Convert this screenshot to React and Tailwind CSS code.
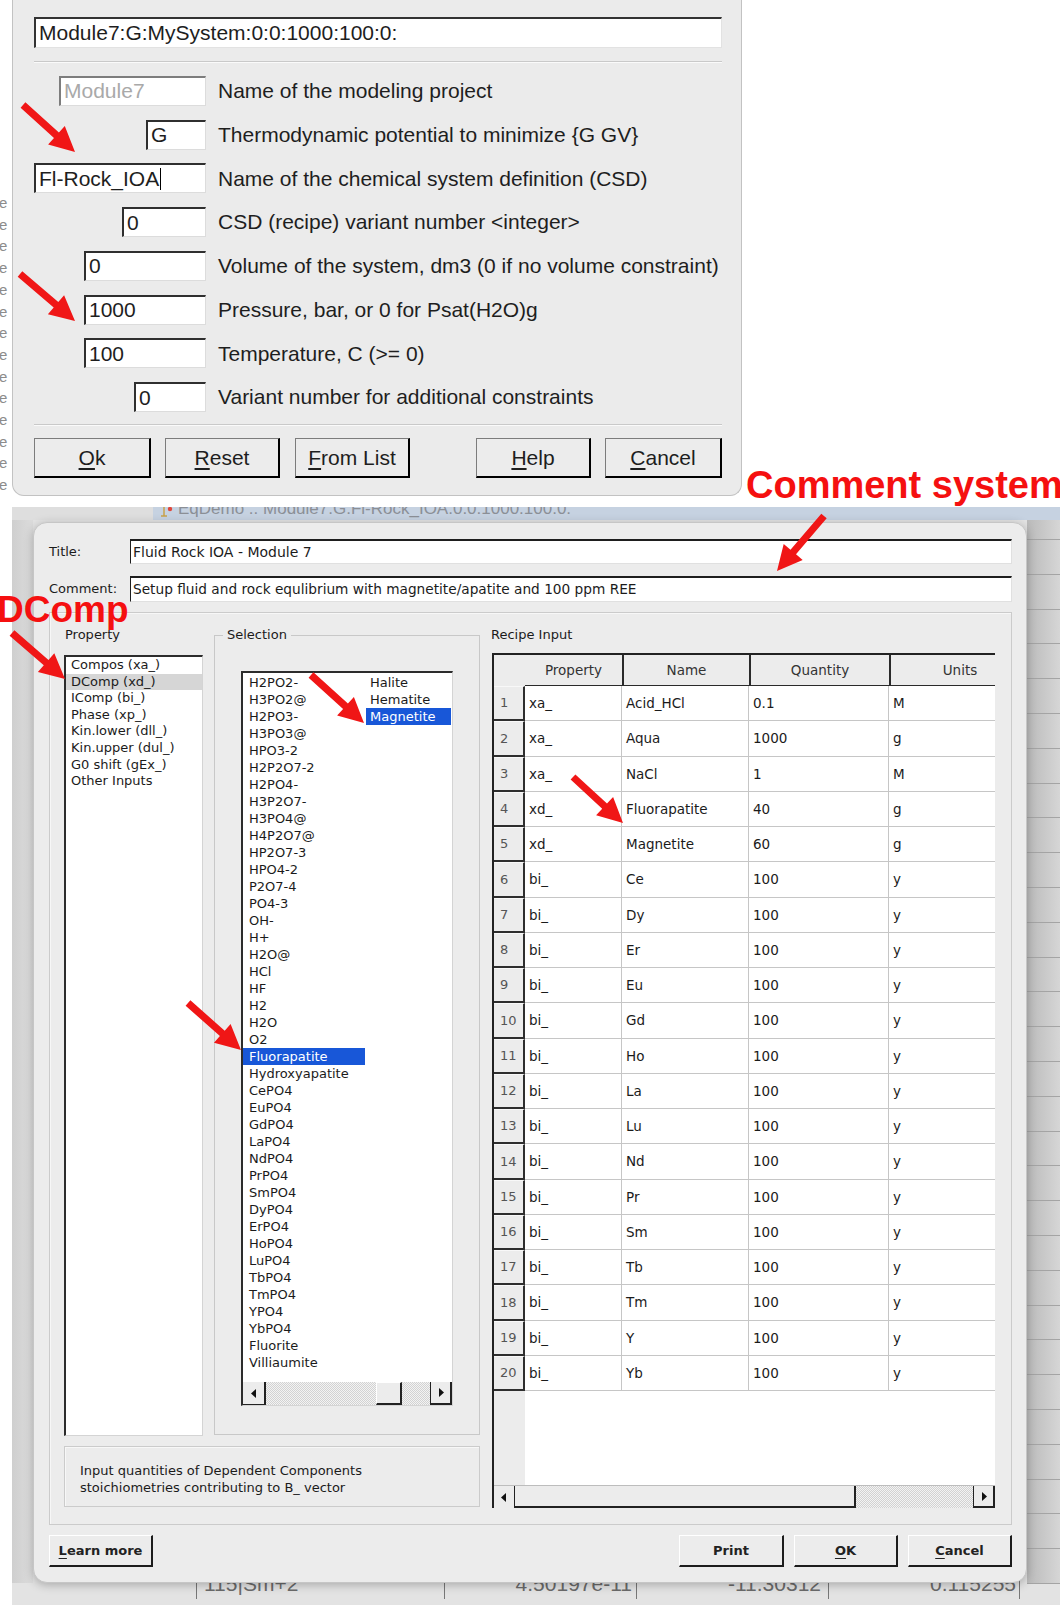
import React from 'react'

// ---- data -------------------------------------------------------------

const topRows = [
  { value: 'Module7', width: 'w-[147px]', label: 'Name of the modeling project', muted: true },
  { value: 'G', width: 'w-[60px]', label: 'Thermodynamic potential to minimize {G GV}' },
  { value: 'Fl-Rock_IOA', width: 'w-[172px]', label: 'Name of the chemical system definition (CSD)', cursor: true },
  { value: '0', width: 'w-[84px]', label: 'CSD (recipe) variant number <integer>' },
  { value: '0', width: 'w-[122px]', label: 'Volume of the system, dm3 (0 if no volume constraint)' },
  { value: '1000', width: 'w-[122px]', label: 'Pressure, bar, or 0 for Psat(H2O)g' },
  { value: '100', width: 'w-[122px]', label: 'Temperature, C (>= 0)' },
  { value: '0', width: 'w-[72px]', label: 'Variant number for additional constraints' },
]

const properties = [
  'Compos (xa_)', 'DComp (xd_)', 'IComp (bi_)', 'Phase (xp_)',
  'Kin.lower (dll_)', 'Kin.upper (dul_)', 'G0 shift (gEx_)', 'Other Inputs',
]

const species = [
  'H2PO2-', 'H3PO2@', 'H2PO3-', 'H3PO3@', 'HPO3-2', 'H2P2O7-2', 'H2PO4-', 'H3P2O7-',
  'H3PO4@', 'H4P2O7@', 'HP2O7-3', 'HPO4-2', 'P2O7-4', 'PO4-3', 'OH-', 'H+', 'H2O@',
  'HCl', 'HF', 'H2', 'H2O', 'O2', 'Fluorapatite', 'Hydroxyapatite', 'CePO4', 'EuPO4',
  'GdPO4', 'LaPO4', 'NdPO4', 'PrPO4', 'SmPO4', 'DyPO4', 'ErPO4', 'HoPO4', 'LuPO4',
  'TbPO4', 'TmPO4', 'YPO4', 'YbPO4', 'Fluorite', 'Villiaumite',
]

const phases = ['Halite', 'Hematite', 'Magnetite']

const ree = ['Ce', 'Dy', 'Er', 'Eu', 'Gd', 'Ho', 'La', 'Lu', 'Nd', 'Pr', 'Sm', 'Tb', 'Tm', 'Y', 'Yb']

const recipe = [
  ['xa_', 'Acid_HCl', '0.1', 'M'],
  ['xa_', 'Aqua', '1000', 'g'],
  ['xa_', 'NaCl', '1', 'M'],
  ['xd_', 'Fluorapatite', '40', 'g'],
  ['xd_', 'Magnetite', '60', 'g'],
  ...ree.map(el => ['bi_', el, '100', 'y']),
]

const arrows = [
  [[23, 105], [75, 152]],
  [[20, 274], [75, 321]],
  [[824, 516], [777, 571]],
  [[12, 633], [65, 679]],
  [[311, 675], [364, 723]],
  [[188, 1003], [241, 1050]],
  [[573, 777], [623, 823]],
]

// ---- helpers ----------------------------------------------------------

const arrowPoints = ([x1, y1], [x2, y2]) => {
  const w = 3.6, hl = 25, hw = 12.5
  const len = Math.hypot(x2 - x1, y2 - y1)
  const ux = (x2 - x1) / len, uy = (y2 - y1) / len
  const nx = -uy, ny = ux
  const bx = x2 - ux * hl, by = y2 - uy * hl
  const pts = [
    [x1 + nx * w, y1 + ny * w],
    [bx + nx * w, by + ny * w],
    [bx + nx * hw, by + ny * hw],
    [x2, y2],
    [bx - nx * hw, by - ny * hw],
    [bx - nx * w, by - ny * w],
    [x1 - nx * w, y1 - ny * w],
  ]
  return pts.map(p => p.map(v => v.toFixed(1)).join(',')).join(' ')
}

const Mnemonic = ({ text }) => (
  <span><span className="underline underline-offset-[3px]">{text[0]}</span>{text.slice(1)}</span>
)

const Triangle = ({ dir }) => (
  <svg width="6" height="9" viewBox="0 0 6 9">
    {dir === 'left'
      ? <polygon points="5,0 5,9 0,4.5" fill="#111" />
      : <polygon points="1,0 1,9 6,4.5" fill="#111" />}
  </svg>
)

const dither = "bg-[image:repeating-conic-gradient(#d2d2d2_0_25%,#f3f3f3_0_50%)] bg-[length:2px_2px]"

// ---- upper dialog -----------------------------------------------------

function TopButton({ label, width }) {
  return (
    <div className={`${width} h-[40px] bg-[#ececec] border border-[#7c7c7c] border-r-2 border-b-2 border-r-black border-b-black flex items-center justify-center text-[21px]`}>
      <Mnemonic text={label} />
    </div>
  )
}

function ParamDialog() {
  return (
    <div className="w-[730px] h-[496px] bg-[#ebebeb] border-l border-r border-b border-[#c2c2c2] rounded-b-[12px] pl-[21px] pr-[19px] pt-[17px] flex flex-col font-['Liberation_Sans',Arial,sans-serif] text-[#1e1e1e]">
      <div className="h-[31px] w-full bg-white border-t-2 border-l-2 border-r border-b border-[#333] border-r-[#e2e2e2] border-b-[#e2e2e2] pl-[3px] text-[21px] leading-[28px]">
        Module7:G:MySystem:0:0:1000:100:0:
      </div>
      <div className="mt-[13px] h-0 border-t border-b border-t-[#c9c9c9] border-b-[#fafafa]" />
      <div className="mt-[6px] flex flex-col">
        {topRows.map((row, i) => (
          <div key={i} className="h-[43.75px] flex items-center">
            <div className="w-[172px] flex justify-end">
              <div className={`${row.width} h-[30px] bg-white border-t-2 border-l-2 border-r border-b ${row.muted ? 'border-[#7d7d7d] text-[#a9a9a9]' : 'border-[#2f2f2f]'} border-r-[#dcdcdc] border-b-[#dcdcdc] pl-[3px] text-[21px] leading-[26px] flex items-center`}>
                {row.value}
                {row.cursor && <span className="ml-px w-px h-[22px] bg-black" />}
              </div>
            </div>
            <div className="ml-[12px] text-[21px] whitespace-nowrap">{row.label}</div>
          </div>
        ))}
      </div>
      <div className="mt-[5px] h-0 border-t border-b border-t-[#c9c9c9] border-b-[#fafafa]" />
      <div className="mt-[12px] flex">
        <TopButton label="Ok" width="w-[117px]" />
        <div className="ml-[14px]"><TopButton label="Reset" width="w-[115px]" /></div>
        <div className="ml-[15px]"><TopButton label="From List" width="w-[115px]" /></div>
        <div className="ml-[66px]"><TopButton label="Help" width="w-[115px]" /></div>
        <div className="ml-[14px]"><TopButton label="Cancel" width="w-[117px]" /></div>
      </div>
    </div>
  )
}

// ---- recipe sheet -----------------------------------------------------

function SheetButton({ children, width }) {
  return (
    <div className={`${width} h-[32px] bg-[#ececec] border border-t-white border-l-white border-r-2 border-b-2 border-r-[#1c1c1c] border-b-[#1c1c1c] flex items-center justify-center font-bold text-[13px] text-[#222]`}>
      {children}
    </div>
  )
}

function PropertyList() {
  return (
    <div className="w-[139px] flex flex-col">
      <div className="h-[16px] leading-[16px] pl-[1px]">Property</div>
      <div className="mt-[12px] h-[781px] bg-white border-t-2 border-l-2 border-r border-b border-[#2c2c2c] border-r-[#d4d4d4] border-b-[#d4d4d4] flex flex-col">
        {properties.map((p, i) => (
          <div key={p} className={`h-[16.6px] leading-[16.6px] pl-[5px] ${i === 1 ? 'bg-[#d6d6d6]' : ''}`}>{p}</div>
        ))}
      </div>
    </div>
  )
}

function SelectionBox() {
  return (
    <fieldset className="w-[266px] border border-[#c8c8c8] px-[26px] pb-[28px] ml-[11px]">
      <legend className="-ml-[18px] px-[4px] h-[16px] leading-[16px]">Selection</legend>
      <div className="mt-[28px] w-[212px] h-[735px] bg-white border-t-2 border-l-2 border-r border-b border-[#2c2c2c] border-r-[#d4d4d4] border-b-[#d4d4d4] flex flex-col">
        <div className="flex-1 flex pt-[1px]">
          <div className="w-[122px] flex flex-col">
            {species.map(s => (
              <div key={s} className={`h-[17px] leading-[17px] pl-[6px] ${s === 'Fluorapatite' ? 'bg-[#1857d8] text-white' : ''}`}>{s}</div>
            ))}
          </div>
          <div className="ml-px w-[85px] flex flex-col">
            {phases.map(s => (
              <div key={s} className={`h-[17px] leading-[17px] pl-[4px] ${s === 'Magnetite' ? 'bg-[#1857d8] text-white' : ''}`}>{s}</div>
            ))}
          </div>
        </div>
        <div className={`h-[23px] flex ${dither}`}>
          <div className="w-[23px] bg-[#ececec] border-r-2 border-b border-[#222] flex items-center justify-center"><Triangle dir="left" /></div>
          <div className="ml-[110px] w-[26px] bg-[#ececec] border-t border-l border-r-2 border-b-2 border-[#222] border-t-white border-l-white" />
          <div className="ml-auto w-[22px] bg-[#ececec] border-l border-r-2 border-b-2 border-[#222] flex items-center justify-center"><Triangle dir="right" /></div>
        </div>
      </div>
    </fieldset>
  )
}

function RecipeTable() {
  return (
    <div className="flex flex-col">
      <div className="h-[16px] leading-[16px]">Recipe Input</div>
      <div className="mt-[10px] ml-px w-[503px] h-[855px] bg-white border-t-2 border-l-2 border-[#222] overflow-hidden flex flex-col text-[13.5px]">
        <div className="h-[31px] flex flex-none bg-[#ececec] text-[#333]">
          <div className="w-[31px] flex-none" />
          <div className="w-[97px] flex-none border-b border-[#2a2a2a] flex items-center justify-center">Property</div>
          <div className="w-[127px] flex-none border-l-2 border-b border-[#2a2a2a] flex items-center justify-center">Name</div>
          <div className="w-[140px] flex-none border-l-2 border-b border-[#2a2a2a] flex items-center justify-center">Quantity</div>
          <div className="w-[140px] flex-none border-l-2 border-b border-[#2a2a2a] flex items-center justify-center">Units</div>
        </div>
        {recipe.map((r, i) => (
          <div key={i} className="h-[35.25px] flex flex-none">
            <div className="w-[31px] flex-none bg-[#ececec] border-t border-t-[#f8f8f8] border-r-2 border-b-2 border-[#2e2e2e] text-[#555] flex items-center pl-[6px] text-[13px]">{i + 1}</div>
            <div className="w-[97px] flex-none border-r border-b border-[#c6c6c6] flex items-center pl-[4px]">{r[0]}</div>
            <div className="w-[127px] flex-none border-r border-b border-[#c6c6c6] flex items-center pl-[4px]">{r[1]}</div>
            <div className="w-[140px] flex-none border-r border-b border-[#c6c6c6] flex items-center pl-[4px]">{r[2]}</div>
            <div className="w-[140px] flex-none border-r border-b border-[#c6c6c6] flex items-center pl-[4px]">{r[3]}</div>
          </div>
        ))}
        <div className="flex-1 flex">
          <div className="w-[31px] bg-[#ececec]" />
        </div>
        <div className="h-[23px] flex-none flex bg-[#ececec] border-t border-[#bdbdbd]">
          <div className="w-[21px] border-r border-[#222] flex items-center justify-center"><Triangle dir="left" /></div>
          <div className="w-[341px] border-r-2 border-b-2 border-[#222]" />
          <div className={`flex-1 ${dither}`} />
          <div className="w-[22px] border-l border-r-2 border-b-2 border-[#222] flex items-center justify-center"><Triangle dir="right" /></div>
        </div>
      </div>
    </div>
  )
}

function RecipeSheet() {
  return (
    <div className="relative z-10 w-[994px] h-[1061px] rounded-[14px] bg-[#ececec] border border-[#c6c6c6] shadow-[0_2px_10px_rgba(0,0,0,0.25)] pl-[15px] pr-[14px] pt-[16px] flex flex-col font-['DejaVu_Sans',sans-serif] text-[13px] text-[#1b1b1b]">
      <div className="h-[25px] flex items-center">
        <div className="w-[81px]">Title:</div>
        <div className="flex-1 h-full bg-white border-t-2 border-l border-r border-b border-[#1e1e1e] border-r-[#e0e0e0] border-b-[#e0e0e0] pl-[2px] text-[14px] flex items-center">Fluid Rock IOA - Module 7</div>
      </div>
      <div className="mt-[12px] h-[26px] flex items-center">
        <div className="w-[81px]">Comment:</div>
        <div className="flex-1 h-full bg-white border-t-2 border-l border-r border-b border-[#1e1e1e] border-r-[#e0e0e0] border-b-[#e0e0e0] pl-[2px] text-[13.7px] flex items-center">Setup fluid and rock equlibrium with magnetite/apatite and 100 ppm REE</div>
      </div>
      <div className="mt-[10px] h-[913px] border border-[#cbcbcb] shadow-[inset_1px_1px_0_#f7f7f7] pl-[14px] pt-[14px] flex">
        <div className="w-[416px] flex flex-col">
          <div className="flex items-start">
            <PropertyList />
            <SelectionBox />
          </div>
          <div className="mt-[10px] h-[61px] border border-[#cbcbcb] shadow-[inset_1px_1px_0_#f7f7f7] px-[15px] pt-[15px] leading-[17px]">
            <div>Input quantities of Dependent Components</div>
            <div>stoichiometries contributing to B_ vector</div>
          </div>
        </div>
        <div className="ml-[11px]">
          <RecipeTable />
        </div>
      </div>
      <div className="mt-[10px] flex">
        <SheetButton width="w-[104px]"><Mnemonic text="Learn more" /></SheetButton>
        <div className="ml-auto"><SheetButton width="w-[105px]">Print</SheetButton></div>
        <div className="ml-[10px]"><SheetButton width="w-[104px]"><Mnemonic text="OK" /></SheetButton></div>
        <div className="ml-[10px]"><SheetButton width="w-[104px]"><Mnemonic text="Cancel" /></SheetButton></div>
      </div>
    </div>
  )
}

// ---- window behind the sheet -------------------------------------------

function BackWindow() {
  return (
    <div className="flex-1 flex flex-col bg-[#e3e3e3] overflow-hidden">
      <div className="h-[13px] flex flex-none">
        <div className="w-[141px] bg-[#dedede]" />
        <div className="flex-1 bg-[#c6d2e1] overflow-hidden flex items-start pl-[7px]">
          <svg width="16" height="13" viewBox="0 0 16 13" className="flex-none">
            <line x1="4" y1="0" x2="4" y2="9" stroke="#c9a24a" strokeWidth="1.5" />
            <line x1="1" y1="9" x2="7" y2="9" stroke="#c9a24a" strokeWidth="1.5" />
            <circle cx="10" cy="2" r="2.2" fill="#e0483c" />
          </svg>
          <div className="-mt-[7px] ml-[2px] whitespace-nowrap text-[17px] leading-[17px] text-[#8b8f96] font-['Liberation_Sans',Arial,sans-serif]">
            EqDemo :: Module7:G:Fl-Rock_IOA:0:0:1000:100:0:
          </div>
        </div>
      </div>
      <div className="h-[1063px] flex flex-none">
        <div className="w-[21px] bg-linear-to-r from-[#cfcfcf] to-[#dcdcdc]" />
        <div className="pt-[2px]">
          <RecipeSheet />
        </div>
        <div className="flex-1 flex flex-col bg-linear-to-r from-[#bababa] to-[#d6d6d6]">
          <div className="h-[20px] flex-none border-b border-[#a4a4a4]" />
          {Array.from({ length: 30 }).map((_, i) => (
            <div key={i} className="h-[34.8px] flex-none border-b border-[#a4a4a4]" />
          ))}
        </div>
      </div>
      <div className="relative z-0 -mt-[10px] h-[32px] flex text-[21px] leading-[21px] text-[#6a6a6a] font-['Liberation_Sans',Arial,sans-serif]">
        <div className="w-[184px]" />
        <div className="w-[248px] h-[26px] border-l border-[#777] pl-[7px]">115|Sm+2</div>
        <div className="w-[192px] h-[26px] border-l border-[#777] pr-[4px] text-right">4.50197e-11</div>
        <div className="w-[192px] h-[26px] border-l border-[#777] pr-[7px] text-right">-11.30312</div>
        <div className="w-[192px] h-[26px] border-l border-r border-[#777] pr-[3px] text-right">0.115255</div>
      </div>
    </div>
  )
}

// ---- page ---------------------------------------------------------------

export default function App() {
  return (
    <div className="relative w-[1060px] h-[1605px] overflow-hidden bg-white">
      <div className="flex h-[507px]">
        <div className="w-[12px] overflow-hidden flex flex-col pt-[192px] text-[15px] leading-[21.7px] text-[#8c8c8c] font-['Liberation_Sans',Arial,sans-serif]">
          {Array.from({ length: 14 }).map((_, i) => (
            <div key={i} className="-ml-[1px]">e</div>
          ))}
        </div>
        <ParamDialog />
        <div className="flex-1" />
      </div>
      <div className="flex h-[1098px]">
        <div className="w-[12px]" />
        <BackWindow />
      </div>

      {/* annotations drawn over the screenshots */}
      <svg className="absolute inset-0 z-20 pointer-events-none" width="1060" height="1605" viewBox="0 0 1060 1605">
        {arrows.map(([a, b], i) => (
          <polygon key={i} points={arrowPoints(a, b)} fill="#f01616" />
        ))}
      </svg>
      <div className="absolute z-20 left-[746px] top-[466px] text-[38px] leading-none font-bold text-[#f51010] font-['Liberation_Sans',Arial,sans-serif] whitespace-nowrap">Comment system</div>
      <div className="absolute z-20 -left-[3px] top-[591px] text-[37px] leading-none font-bold text-[#f51010] font-['Liberation_Sans',Arial,sans-serif] whitespace-nowrap">DComp</div>
    </div>
  )
}
